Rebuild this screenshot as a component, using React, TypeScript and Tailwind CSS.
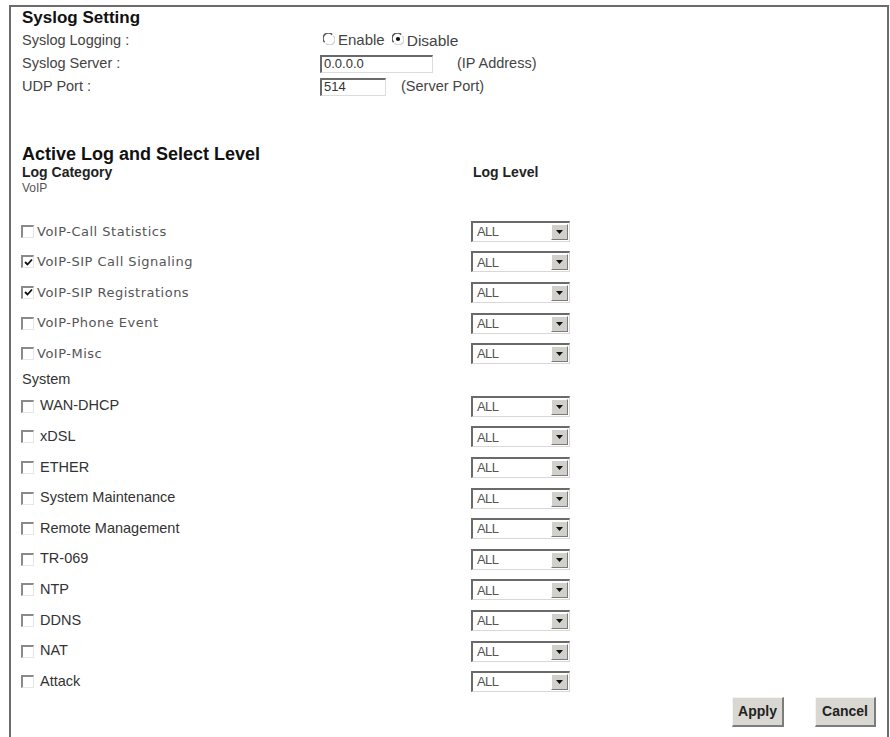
import React from 'react';

type LogRow = { label: string; checked: boolean };

const voipRows: LogRow[] = [
    { label: 'VoIP-Call Statistics', checked: false },
    { label: 'VoIP-SIP Call Signaling', checked: true },
    { label: 'VoIP-SIP Registrations', checked: true },
    { label: 'VoIP-Phone Event', checked: false },
    { label: 'VoIP-Misc', checked: false },
];

const systemRows: LogRow[] = [
    { label: 'WAN-DHCP', checked: false },
    { label: 'xDSL', checked: false },
    { label: 'ETHER', checked: false },
    { label: 'System Maintenance', checked: false },
    { label: 'Remote Management', checked: false },
    { label: 'TR-069', checked: false },
    { label: 'NTP', checked: false },
    { label: 'DDNS', checked: false },
    { label: 'NAT', checked: false },
    { label: 'Attack', checked: false },
];

const arial = { fontFamily: '"Liberation Sans", Arial, sans-serif' };
const verdana = { fontFamily: '"DejaVu Sans", Verdana, sans-serif' };

// old-style 3D checkbox, sunken on the top/left edges
function CheckBox({ checked }: { checked: boolean }) {
    return (
        <span className="inline-flex w-[13px] h-[13px] shrink-0 bg-white border-t-2 border-l-2 border-b border-r border-t-[#8a8a8a] border-l-[#8a8a8a] border-b-[#e6e6e6] border-r-[#e6e6e6] items-center justify-center">
            {checked && (
                <svg width="9" height="9" viewBox="0 0 9 9">
                    <path d="M1 4 L3.5 6.5 L8 1.5" fill="none" stroke="#111" strokeWidth="1.8" />
                </svg>
            )}
        </span>
    );
}

function Radio({ checked }: { checked: boolean }) {
    return (
        <svg width="12" height="12" viewBox="0 0 12 12" className="shrink-0 -mt-[4px]">
            <circle cx="6" cy="6" r="5.5" fill="#fff" />
            <path d="M1.6 9.2 A5 5 0 0 1 9.2 1.6" fill="none" stroke="#5a5a5a" strokeWidth="1.5" />
            <path d="M10.4 2.8 A5 5 0 0 1 2.8 10.4" fill="none" stroke="#d0d0d0" strokeWidth="1.2" />
            {checked && <circle cx="6" cy="6" r="2.1" fill="#111" />}
        </svg>
    );
}

function LevelSelect() {
    return (
        <div className="flex w-[99px] h-[21px] bg-white border-t-2 border-l-2 border-b border-r border-t-[#6a6a6a] border-l-[#6a6a6a] border-b-[#d8d8d8] border-r-[#d8d8d8]">
            <span className="flex-1 flex items-center pl-[4px] text-[13px] text-[#555] tracking-[-0.6px]" style={arial}>
                ALL
            </span>
            <span className="w-[17px] my-px mr-px bg-[#d2d0ca] border-t border-l border-b border-r border-t-white border-l-white border-b-[#7a7a7a] border-r-[#7a7a7a] flex items-center justify-center">
                <svg width="7" height="4" viewBox="0 0 7 4">
                    <path d="M0 0 H7 L3.5 4 Z" fill="#111" />
                </svg>
            </span>
        </div>
    );
}

function TextBox({ value, width }: { value: string; width: string }) {
    return (
        <div className={`${width} h-[18px] bg-white flex items-center pl-[2px] border-t-2 border-l-2 border-b border-r border-t-[#6a6a6a] border-l-[#6a6a6a] border-b-[#dcdcdc] border-r-[#dcdcdc] text-[13px] text-[#333]`} style={arial}>
            {value}
        </div>
    );
}

function CategoryRow({ row, voip }: { row: LogRow; voip: boolean }) {
    return (
        <div className="flex items-center h-[30.6px]">
            <div className="w-[450px] flex items-center -ml-px">
                <CheckBox checked={row.checked} />
                {voip ? (
                    <span className="ml-[3px] text-[13px] tracking-[0.5px] text-[#555]" style={verdana}>{row.label}</span>
                ) : (
                    <span className="ml-[6px] text-[14.5px] text-[#333]" style={arial}>{row.label}</span>
                )}
            </div>
            <LevelSelect />
        </div>
    );
}

function FormButton({ label, width }: { label: string; width: string }) {
    return (
        <button className={`${width} h-[30px] bg-[#d9d7d2] border-t border-l border-b-2 border-r-2 border-t-[#f4f4f4] border-l-[#f4f4f4] border-b-[#7c7c7c] border-r-[#7c7c7c] text-[14px] font-bold text-[#222]`} style={arial}>
            {label}
        </button>
    );
}

export default function App() {
    return (
        <div className="w-[890px] h-[737px] overflow-hidden bg-white pt-[5px] pl-[9px] pr-px">
            <div className="h-[760px] border-t-2 border-l-2 border-r-2 border-[#6c6c6c] pl-[11px] pr-[11px] text-[#333]" style={arial}>
                <div className="h-[22px] flex items-center text-[17px] font-bold text-[#111]">Syslog Setting</div>

                <div className="flex items-center h-[23px] text-[14.5px]">
                    <div className="w-[299px] text-[#444]">Syslog Logging :</div>
                    <label className="flex items-center gap-[3px] ml-[2px]">
                        <Radio checked={false} />
                        <span className="text-[15px] text-[#444]">Enable</span>
                    </label>
                    <label className="flex items-center gap-[3px] ml-[7px]">
                        <Radio checked={true} />
                        <span className="text-[15.5px] text-[#444]">Disable</span>
                    </label>
                </div>
                <div className="flex items-center h-[23px] text-[14.5px]">
                    <div className="w-[298px] text-[#444]">Syslog Server :</div>
                    <TextBox value="0.0.0.0" width="w-[113px]" />
                    <span className="ml-[24px] text-[#444]">(IP Address)</span>
                </div>
                <div className="flex items-center h-[23px] text-[14.5px]">
                    <div className="w-[298px] text-[#444]">UDP Port :</div>
                    <TextBox value="514" width="w-[66px]" />
                    <span className="ml-[15px] text-[#444]">(Server Port)</span>
                </div>

                <div className="mt-[45px] h-[22px] flex items-center text-[18px] font-bold text-[#111]">Active Log and Select Level</div>
                <div className="flex items-center h-[15px] text-[14px] font-bold text-[#222]">
                    <div className="w-[451px]">Log Category</div>
                    <div>Log Level</div>
                </div>
                <div className="h-[16px] flex items-center text-[12px] text-[#555]">VoIP</div>

                <div className="mt-[20px]">
                    {voipRows.map((row) => (
                        <CategoryRow key={row.label} row={row} voip />
                    ))}
                </div>
                <div className="h-[22px] flex items-center text-[14.5px] text-[#333]">System</div>
                <div>
                    {systemRows.map((row) => (
                        <CategoryRow key={row.label} row={row} voip={false} />
                    ))}
                </div>

                <div className="flex justify-end gap-[31px]">
                    <FormButton label="Apply" width="w-[52px]" />
                    <FormButton label="Cancel" width="w-[61px]" />
                </div>
            </div>
        </div>
    );
}
